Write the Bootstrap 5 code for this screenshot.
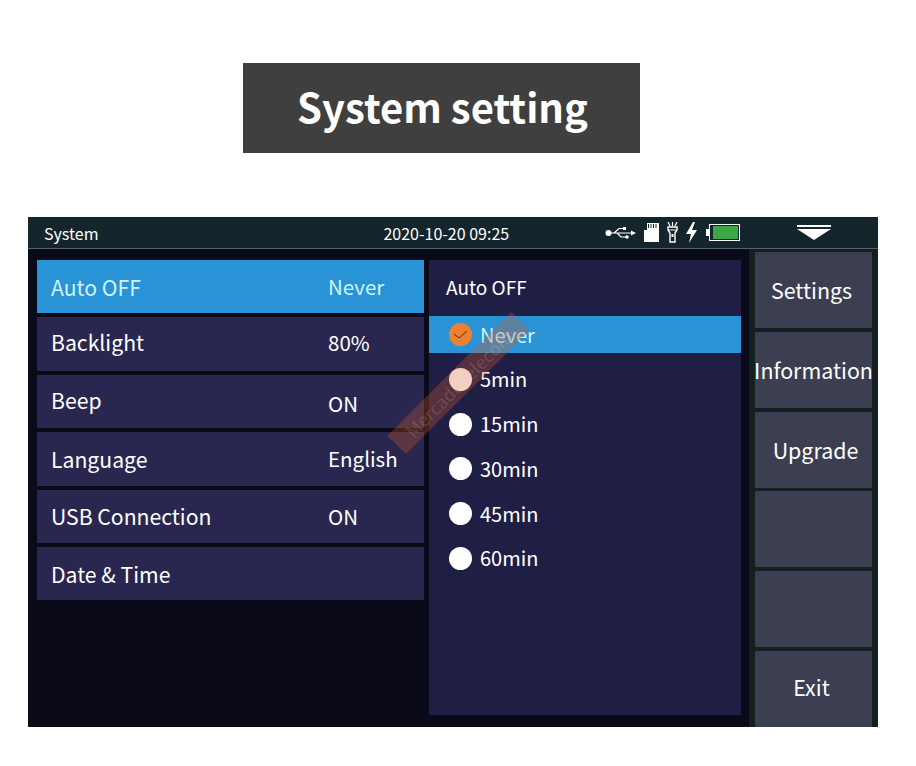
<!DOCTYPE html>
<html lang="en">
  <head>
    <meta charset="UTF-8" />
    <meta name="viewport" content="width=device-width, initial-scale=1.0" />
    <title>System setting</title>
    <link href="https://cdn.jsdelivr.net/npm/bootstrap@5.3.3/dist/css/bootstrap.min.css" rel="stylesheet" />
    <style>
      body { background: #fff; font-family: "Noto Sans CJK SC", "Noto Sans", sans-serif; height: 766px; overflow: hidden; padding-top: 63px; }
      .banner { width: 397px; height: 90px; margin-left: 243px; padding-left: 2px; background: #3f3f3f; font-size: 40px; line-height: 86px; font-weight: 700; color: #fff; }
      .screen { width: 850px; height: 510px; margin: 64px 0 0 28px; background: #0a0a18; color: #fff; position: relative; overflow: hidden; }
      .topbar { height: 32px; background: #14252b; border-bottom: 1px solid #56646a; font-size: 16px; padding-left: 16px; }
      .topbar-date { margin-left: 285px; width: 222px; }
      .topbar-icons { gap: 7.6px; width: 192px; }
      .main-area { height: 478px; }
      .left-col { width: 387px; margin: 11px 0 0 9px; gap: 4px; }
      .setting-row { height: 53.4px; background: #29274f; font-size: 21.2px; padding-left: 14px; }
      .setting-row.active { background: #2a93d5; color: #cdf3f7; }
      .setting-name { width: 277px; }
      .setting-val { font-size: 20.5px; }
      .mid-col { width: 312px; height: 455px; margin: 11px 0 0 5px; background: #1f1f45; }
      .mid-title { height: 56px; padding: 0 0 2px 17px; font-size: 19px; }
      .opt-row { height: 37px; margin-bottom: 7.8px; padding-left: 20px; gap: 8px; font-size: 20px; }
      .opt-row.active { background: #2a93d5; color: #cdf3f7; }
      .opt-dot { width: 23px; height: 23px; border-radius: 50%; background: #fff; }
      .opt-dot.checked { background: #ee8130; }
      .side-col { width: 129px; margin-left: 8px; background: #12201f; padding: 3px 6px 0; gap: 3.6px; }
      .side-btn { height: 76.4px; background: #3c3f52; font-size: 21.4px; white-space: nowrap; }
      .stamp { position: absolute; left: 343px; top: 153px; width: 175px; height: 26px; background: rgba(214,90,40,.3); transform: rotate(-45deg); font-size: 18px; line-height: 26px; color: rgba(255,255,255,.14); text-align: center; overflow: hidden; white-space: nowrap; }
    </style>
  </head>

  <body>
    <div class="banner text-center">System setting</div>

    <div class="screen">
      <div class="topbar d-flex align-items-center">
        <span class="topbar-sys">System</span>
        <span class="topbar-date">2020-10-20 09:25</span>
        <div class="topbar-icons d-flex align-items-center">
          <svg width="31" height="14" viewBox="0 0 31 14">
            <circle cx="3.5" cy="7" r="3" fill="#fff" />
            <path d="M3 7H29M9 7L14 2.5H19M12 7L16 11H21" stroke="#fff" stroke-width="1.2" fill="none" />
            <path d="M26 4.5L31 7L26 9.5Z" fill="#fff" />
            <rect x="18" y="1" width="3" height="3" fill="#fff" />
            <circle cx="22" cy="11" r="1.8" fill="#fff" />
          </svg>
          <svg width="15" height="19" viewBox="0 0 15 19">
            <path d="M3 0H15V19H0V7H3Z" fill="#fff" />
            <path d="M4.5 1V5M7 1V5M9.5 1V5M12 1V5" stroke="#14252b" stroke-width="1" />
          </svg>
          <svg width="11" height="21" viewBox="0 0 11 21">
            <path d="M1 0L3 4M5.5 0V4M10 0L8 4" stroke="#fff" stroke-width="1.2" />
            <path d="M1 5H10V8L8 11V20H3V11L1 8Z" fill="none" stroke="#fff" stroke-width="1.4" />
            <path d="M1 8H10" stroke="#fff" />
            <rect x="4.5" y="12" width="2" height="3" fill="#fff" />
          </svg>
          <svg width="13" height="21" viewBox="0 0 13 21">
            <path d="M8 0L1 12H6L4 21L12 8H7L10 0Z" fill="#fff" />
          </svg>
          <svg width="34" height="17" viewBox="0 0 34 17">
            <rect x="0" y="5" width="3" height="7" fill="#fff" />
            <rect x="3.5" y=".5" width="30" height="16" fill="none" stroke="#fff" />
            <rect x="7" y="2" width="25" height="13" fill="#3da647" />
          </svg>
        </div>
        <svg class="topbar-arrow" width="34" height="16" viewBox="0 0 34 16">
          <rect x="0" y="0" width="34" height="2" fill="#fff" />
          <path d="M0 4H34L17 15Z" fill="#fff" />
        </svg>
      </div>

      <div class="main-area d-flex">
        <div class="left-col d-flex flex-column">
          <div class="setting-row active d-flex align-items-center"><span class="setting-name">Auto OFF</span><span class="setting-val">Never</span></div>
          <div class="setting-row d-flex align-items-center"><span class="setting-name pb-1">Backlight</span><span class="setting-val pb-1">80%</span></div>
          <div class="setting-row d-flex align-items-center"><span class="setting-name pb-1">Beep</span><span class="setting-val pt-1">ON</span></div>
          <div class="setting-row d-flex align-items-center"><span class="setting-name">Language</span><span class="setting-val">English</span></div>
          <div class="setting-row d-flex align-items-center"><span class="setting-name">USB Connection</span><span class="setting-val">ON</span></div>
          <div class="setting-row d-flex align-items-center"><span class="setting-name">Date &amp; Time</span></div>
        </div>

        <div class="mid-col">
          <div class="mid-title d-flex align-items-center">Auto OFF</div>
          <div class="opt-row active d-flex align-items-center">
            <span class="opt-dot checked d-flex align-items-center justify-content-center">
              <svg width="15" height="10" viewBox="0 0 15 10"><path d="M1 4L6 8L14 1" stroke="#5a2a10" stroke-width="1" fill="none" /></svg>
            </span>
            Never
          </div>
          <div class="opt-row d-flex align-items-center"><span class="opt-dot"></span>5min</div>
          <div class="opt-row d-flex align-items-center"><span class="opt-dot"></span>15min</div>
          <div class="opt-row d-flex align-items-center"><span class="opt-dot"></span>30min</div>
          <div class="opt-row d-flex align-items-center"><span class="opt-dot"></span>45min</div>
          <div class="opt-row d-flex align-items-center"><span class="opt-dot"></span>60min</div>
        </div>

        <div class="side-col d-flex flex-column">
          <div class="side-btn d-flex align-items-center justify-content-center pe-1">Settings</div>
          <div class="side-btn d-flex align-items-center justify-content-center">Information</div>
          <div class="side-btn d-flex align-items-center justify-content-center ps-1">Upgrade</div>
          <div class="side-btn"></div>
          <div class="side-btn"></div>
          <div class="side-btn d-flex align-items-center justify-content-center pb-1 pe-1">Exit</div>
        </div>
      </div>

      <div class="stamp">MercadoTelecom</div>
    </div>
  </body>
</html>
